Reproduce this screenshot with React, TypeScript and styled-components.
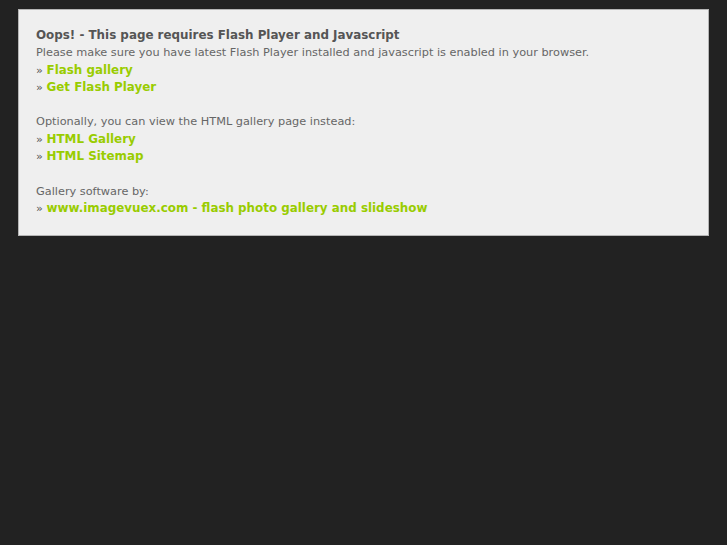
import React from "react";
import styled, { createGlobalStyle } from "styled-components";

const GlobalStyle = createGlobalStyle`
  html, body {
    margin: 0;
    padding: 0;
    background: #222222;
  }
  body {
    font-family: "DejaVu Sans", Verdana, sans-serif;
    font-size: 11.3px;
  }
`;

const Page = styled.div`
  padding: 9px 18px;
`;

const Notice = styled.div`
  background: #efefef;
  border: 1px solid #b5b5b5;
  padding: 17px 17px 18px;
  color: #666666;
  line-height: 17.3px;
`;

const Title = styled.div`
  font-size: 11.9px;
  font-weight: bold;
  color: #555555;
`;

const Group = styled.div`
  & + & {
    margin-top: 17.3px;
  }
`;

const LinkRow = styled.div`
  color: #555555;

  a {
    font-size: 11.9px;
    color: #99cc00;
    font-weight: bold;
    text-decoration: none;
  }
`;

interface LinkItem {
  label: string;
  href: string;
}

const LinkList: React.FC<{ links: LinkItem[] }> = ({ links }) => (
  <>
    {links.map((link, idx) => (
      <LinkRow key={idx}>
        » <a href={link.href}>{link.label}</a>
      </LinkRow>
    ))}
  </>
);

export default function App() {
  return (
    <>
      <GlobalStyle />
      <Page>
        <Notice>
          <Group>
            <Title>Oops! - This page requires Flash Player and Javascript</Title>
            <div>
              Please make sure you have latest Flash Player installed and javascript is enabled in your browser.
            </div>
            <LinkList
              links={[
                { label: "Flash gallery", href: "#" },
                { label: "Get Flash Player", href: "#" },
              ]}
            />
          </Group>
          <Group>
            <div>Optionally, you can view the HTML gallery page instead:</div>
            <LinkList
              links={[
                { label: "HTML Gallery", href: "#" },
                { label: "HTML Sitemap", href: "#" },
              ]}
            />
          </Group>
          <Group>
            <div>Gallery software by:</div>
            <LinkList
              links={[{ label: "www.imagevuex.com - flash photo gallery and slideshow", href: "#" }]}
            />
          </Group>
        </Notice>
      </Page>
    </>
  );
}
